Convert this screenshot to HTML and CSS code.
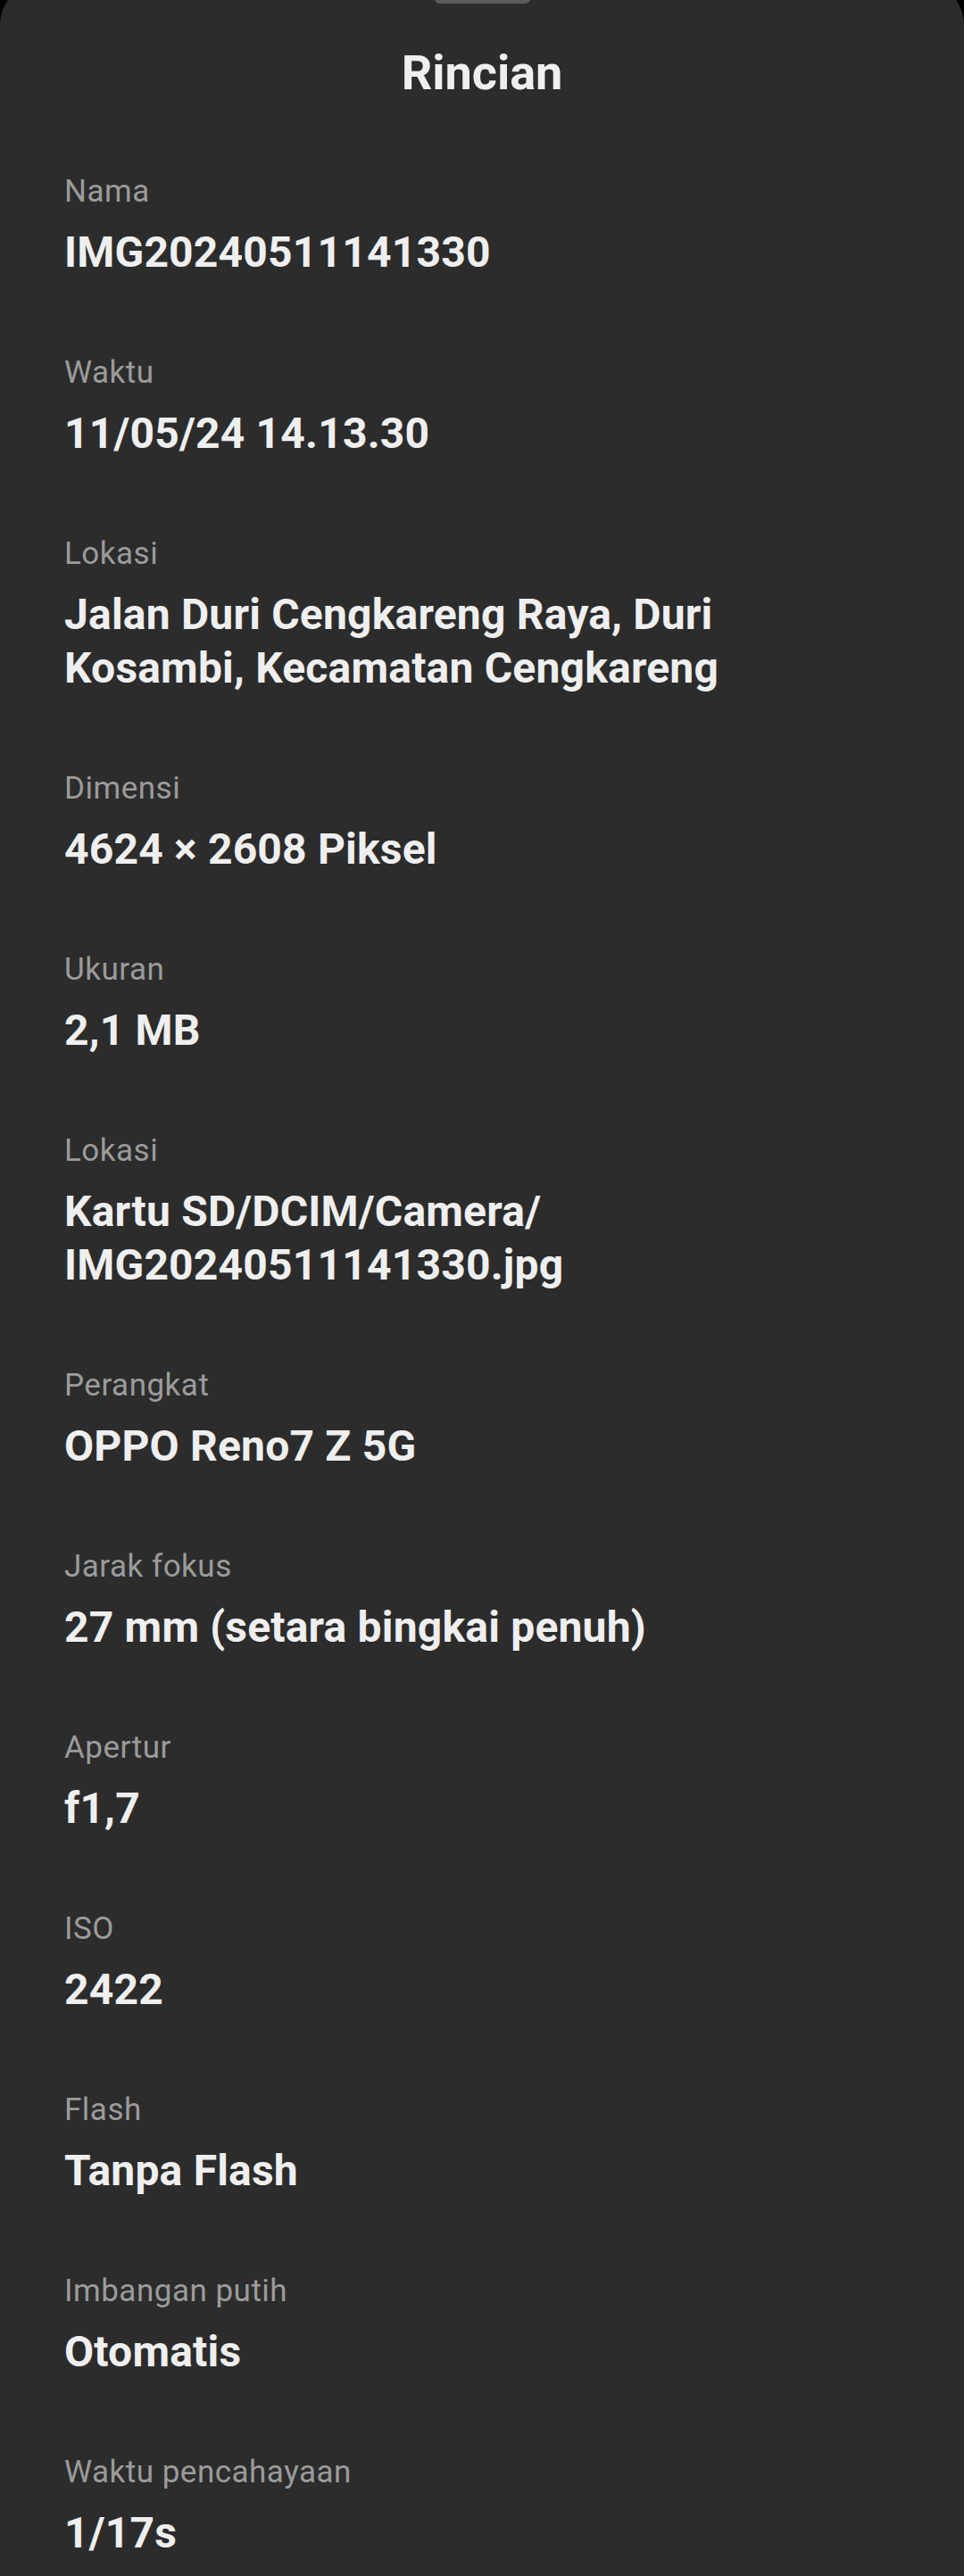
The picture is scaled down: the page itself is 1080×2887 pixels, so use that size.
FILE: index.html
```html
<!DOCTYPE html>
<html lang="id">
<head>
<meta charset="utf-8">
<title>Rincian</title>
<link rel="stylesheet" href="styles.css">
</head>
<body>
<div class="sheet">
  <div class="handle"></div>
  <h1 class="title">Rincian</h1>
  <dl class="details">
    <div class="item"><dt class="label">Nama</dt><dd class="value">IMG20240511141330</dd></div>
    <div class="item"><dt class="label">Waktu</dt><dd class="value">11/05/24 14.13.30</dd></div>
    <div class="item"><dt class="label">Lokasi</dt><dd class="value">Jalan Duri Cengkareng Raya, Duri<br>Kosambi, Kecamatan Cengkareng</dd></div>
    <div class="item"><dt class="label">Dimensi</dt><dd class="value">4624 × 2608 Piksel</dd></div>
    <div class="item"><dt class="label">Ukuran</dt><dd class="value">2,1 MB</dd></div>
    <div class="item"><dt class="label">Lokasi</dt><dd class="value">Kartu SD/DCIM/Camera/<br>IMG20240511141330.jpg</dd></div>
    <div class="item"><dt class="label">Perangkat</dt><dd class="value">OPPO Reno7 Z 5G</dd></div>
    <div class="item"><dt class="label">Jarak fokus</dt><dd class="value">27 mm (setara bingkai penuh)</dd></div>
    <div class="item"><dt class="label">Apertur</dt><dd class="value">f1,7</dd></div>
    <div class="item"><dt class="label">ISO</dt><dd class="value">2422</dd></div>
    <div class="item"><dt class="label">Flash</dt><dd class="value">Tanpa Flash</dd></div>
    <div class="item"><dt class="label">Imbangan putih</dt><dd class="value">Otomatis</dd></div>
    <div class="item"><dt class="label">Waktu pencahayaan</dt><dd class="value">1/17s</dd></div>
  </dl>
</div>
</body>
</html>
```

FILE: styles.css
```css
html, body {
  margin: 0;
  padding: 0;
  background: #000;
}
body {
  font-family: Roboto, "Noto Sans", "Liberation Sans", sans-serif;
  overflow: hidden;
  height: 2887px;
}
.sheet {
  margin-top: -20px;
  background: #2c2c2c;
  border-radius: 48px 48px 0 0;
  min-height: 2907px;
  display: flex;
  flex-direction: column;
  padding: 0 72px;
}
.handle {
  align-self: center;
  width: 107px;
  height: 12px;
  margin-top: 12px;
  border-radius: 6px;
  background: #5c5c5c;
}
.title {
  margin: 46px 0 0;
  text-align: center;
  font-size: 54px;
  line-height: 64px;
  font-weight: 700;
  color: #efefef;
}
.details {
  margin: 79px 0 0;
  display: flex;
  flex-direction: column;
  gap: 83px;
}
.item {
  display: flex;
  flex-direction: column;
  gap: 16px;
}
.label {
  font-size: 35px;
  line-height: 44px;
  letter-spacing: 0.5px;
  color: #9b9b9b;
}
.value {
  margin: 0;
  font-size: 48px;
  line-height: 60px;
  font-weight: 700;
  letter-spacing: 0.2px;
  color: #efefef;
}
```
